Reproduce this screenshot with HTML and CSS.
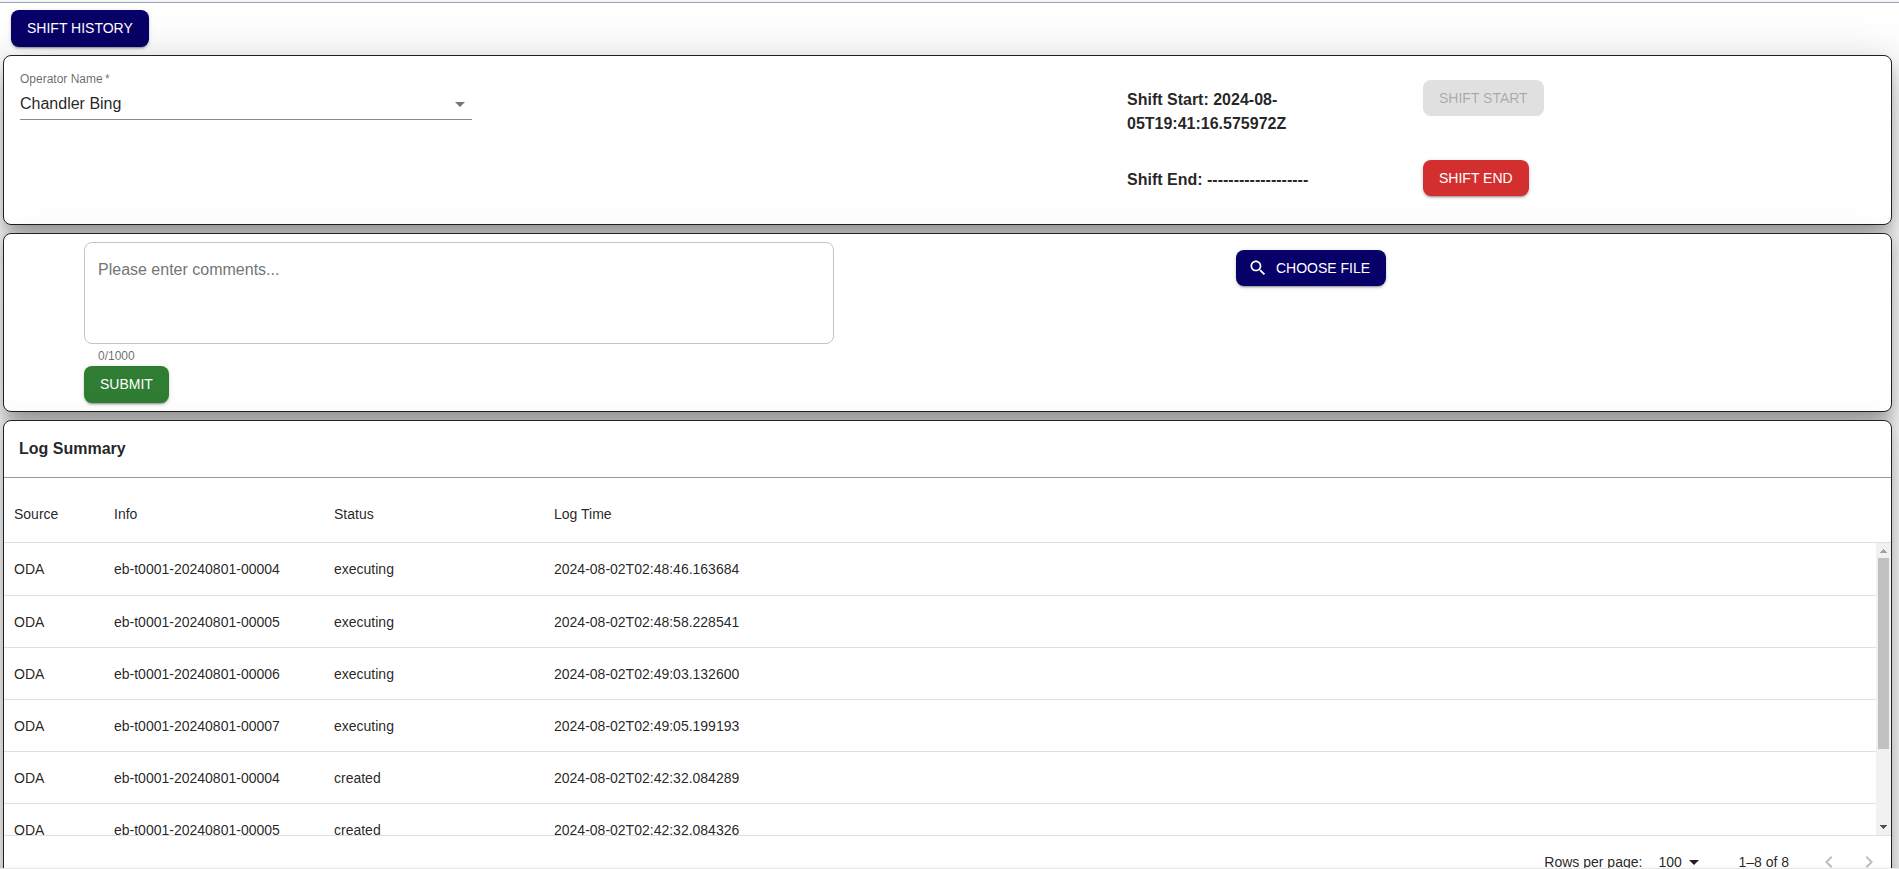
FILE: index.html
```html
<!DOCTYPE html>
<html lang="en">
<head>
<meta charset="utf-8">
<title>Shift Log</title>
<link rel="stylesheet" href="styles.css">
</head>
<body>
<header class="topbar"></header>
<main class="page">
  <div class="actions">
    <button class="btn btn-tall btn-primary" type="button">SHIFT HISTORY</button>
  </div>

  <section class="card shift">
    <div class="field">
      <label class="field-label" for="operator">Operator Name&thinsp;*</label>
      <div class="select-wrap">
        <select id="operator" class="field-select" required><option>Chandler Bing</option></select>
        <svg class="caret" viewBox="0 0 24 24" aria-hidden="true"><path d="M7 10l5 5 5-5z"/></svg>
      </div>
    </div>
    <p class="shift-text">Shift Start: 2024-08-05T19:41:16.575972Z</p>
    <div><button class="btn btn-disabled" type="button" disabled>SHIFT START</button></div>
    <p class="shift-text shift-end">Shift End: -------------------</p>
    <div><button class="btn btn-error" type="button">SHIFT END</button></div>
  </section>

  <section class="card comments">
    <form class="comment-form">
      <textarea class="comment-box" aria-label="Comments" placeholder="Please enter comments..." maxlength="1000"></textarea>
      <p class="helper">0/1000</p>
      <button class="btn btn-tall btn-success" type="button">SUBMIT</button>
    </form>
    <div class="upload">
      <button class="btn btn-primary btn-icon" type="button">
        <svg class="icon" viewBox="0 0 24 24" aria-hidden="true"><path d="M15.5 14h-.79l-.28-.27C15.41 12.59 16 11.11 16 9.5 16 5.91 13.09 3 9.5 3S3 5.91 3 9.5 5.91 16 9.5 16c1.61 0 3.09-.59 4.23-1.57l.27.28v.79l5 4.99L20.49 19l-4.99-5zm-6 0C7.01 14 5 11.99 5 9.5S7.01 5 9.5 5 14 7.01 14 9.5 11.99 14 9.5 14z"/></svg>
        CHOOSE FILE
      </button>
    </div>
  </section>

  <section class="card log">
    <h2 class="log-title">Log Summary</h2>
    <div class="table-wrap">
      <table class="log-table">
        <colgroup><col class="col-source"><col class="col-info"><col class="col-status"><col></colgroup>
        <thead>
          <tr><th>Source</th><th>Info</th><th>Status</th><th>Log Time</th></tr>
        </thead>
        <tbody>
          <tr><td>ODA</td><td>eb-t0001-20240801-00004</td><td>executing</td><td>2024-08-02T02:48:46.163684</td></tr>
          <tr><td>ODA</td><td>eb-t0001-20240801-00005</td><td>executing</td><td>2024-08-02T02:48:58.228541</td></tr>
          <tr><td>ODA</td><td>eb-t0001-20240801-00006</td><td>executing</td><td>2024-08-02T02:49:03.132600</td></tr>
          <tr><td>ODA</td><td>eb-t0001-20240801-00007</td><td>executing</td><td>2024-08-02T02:49:05.199193</td></tr>
          <tr><td>ODA</td><td>eb-t0001-20240801-00004</td><td>created</td><td>2024-08-02T02:42:32.084289</td></tr>
          <tr><td>ODA</td><td>eb-t0001-20240801-00005</td><td>created</td><td>2024-08-02T02:42:32.084326</td></tr>
        </tbody>
      </table>
      <div class="scrollbar" aria-hidden="true">
        <svg class="scroll-arrow" viewBox="0 0 15 15"><path fill="#a3a3a3" d="M7 6h1v1h1v1h1v1h1v1H4V9h1V8h1V7h1z"/></svg>
        <div class="scroll-track"><div class="scroll-thumb"></div></div>
        <svg class="scroll-arrow" viewBox="0 0 15 15"><path fill="#505050" d="M4 5h7v1h-1v1H9v1H8v1H7V8H6V7H5V6H4z"/></svg>
      </div>
    </div>
    <div class="pagination">
      <label for="rows">Rows per page:</label>
      <div class="rows-wrap">
        <select id="rows" class="rows-select"><option>100</option></select>
        <svg class="caret caret-dark" viewBox="0 0 24 24" aria-hidden="true"><path d="M7 10l5 5 5-5z"/></svg>
      </div>
      <span class="range">1–8 of 8</span>
      <button class="page-btn" type="button" aria-label="Previous page" disabled><svg viewBox="0 0 24 24"><path d="M15.41 7.41 14 6l-6 6 6 6 1.41-1.41L10.83 12z"/></svg></button>
      <button class="page-btn" type="button" aria-label="Next page" disabled><svg viewBox="0 0 24 24"><path d="M10 6 8.59 7.41 13.17 12l-4.58 4.59L10 18l6-6z"/></svg></button>
    </div>
  </section>
</main>
<footer class="footer"></footer>
</body>
</html>
```

FILE: styles.css
```css
* { box-sizing: border-box; }

body {
  margin: 0;
  height: 100vh;
  overflow: hidden;
  display: flex;
  flex-direction: column;
  background: #fff;
  color: rgba(0, 0, 0, 0.87);
  font: 14px/20px "Liberation Sans", Arial, sans-serif;
}

p, h2 { margin: 0; }

.topbar {
  flex: none;
  height: 3px;
  background: #f1f7fb;
  border-bottom: 1px solid #9da3a8;
}

.page {
  flex: 1;
  min-height: 0;
  overflow: hidden;
  display: flex;
  flex-direction: column;
  gap: 8px;
  padding: 7px 7px 0 3px;
}

.actions { padding-left: 8px; }

/* Buttons */
.btn {
  display: inline-flex;
  align-items: center;
  height: 36px;
  padding: 0 16px;
  border: 0;
  border-radius: 8px;
  color: #fff;
  font: inherit;
  white-space: nowrap;
  vertical-align: top;
  box-shadow: 0 3px 1px -2px rgba(0, 0, 0, 0.2), 0 2px 2px 0 rgba(0, 0, 0, 0.14), 0 1px 5px 0 rgba(0, 0, 0, 0.12);
}
.btn-tall { height: 37px; padding-bottom: 1px; }
.btn-primary { background: #070068; }
.btn-error { background: #d32f2f; }
.btn-success { background: #2e7d32; }
.btn-disabled { background: #e0e0e0; color: rgba(0, 0, 0, 0.26); box-shadow: none; }
.btn-icon { gap: 8px; padding-left: 12px; }
.icon { width: 20px; height: 20px; fill: currentColor; }

/* Cards */
.card {
  flex: none;
  position: relative;
  background: #fff;
  border: 1px solid #212121;
  border-radius: 8px;
  box-shadow: 0 11px 15px -7px rgba(0, 0, 0, 0.2), 0 24px 38px 3px rgba(0, 0, 0, 0.14), 0 9px 46px 8px rgba(0, 0, 0, 0.12), 0 6px 12px 0 rgba(0, 0, 0, 0.1);
}
.card + .card {
  box-shadow: 0 11px 15px -7px rgba(0, 0, 0, 0.2), 0 24px 38px 3px rgba(0, 0, 0, 0.14), 0 9px 46px 8px rgba(0, 0, 0, 0.04), 0 9px 16px 4px rgba(0, 0, 0, 0.14);
}

/* Shift panel */
.shift {
  display: grid;
  grid-template-columns: 452fr 655fr 296fr 452fr;
  row-gap: 24px;
  padding: 24px 16px 28px;
}
.field {
  grid-row: span 2;
  margin-top: -9px;
}
.field-label {
  display: block;
  color: rgba(0, 0, 0, 0.6);
  font-size: 12px;
  line-height: 16px;
}
.select-wrap { position: relative; }
.field-select {
  display: block;
  width: 100%;
  height: 33px;
  padding: 2px 0 0;
  border: 0;
  border-bottom: 1px solid #8c8c8c;
  appearance: none;
  background: none;
  color: inherit;
  font: inherit;
  font-size: 16px;
}
.caret {
  position: absolute;
  right: 0;
  top: 5px;
  width: 24px;
  height: 24px;
  fill: rgba(0, 0, 0, 0.54);
  pointer-events: none;
}
.shift-text {
  grid-column: 3;
  margin-left: 0;
  padding-top: 8px;
  font-size: 16px;
  font-weight: bold;
  line-height: 24px;
}
.shift-end { height: 36px; }
.shift { grid-template-columns: 452fr 655fr 296fr 452fr; }

/* Comments panel */
.comments {
  display: grid;
  grid-template-columns: 80fr 750fr 402fr 655fr;
  padding: 8px 0;
}
.comment-form {
  grid-column: 2;
  display: flex;
  flex-direction: column;
  align-items: flex-start;
}
.comment-box {
  display: block;
  width: 100%;
  height: 102px;
  padding: 15px 13px;
  border: 1px solid #c4c4c4;
  border-radius: 8px;
  resize: none;
  background: none;
  color: inherit;
  font: inherit;
  font-size: 16px;
  line-height: 24px;
}
.comment-box::placeholder { color: #757575; }
.helper {
  padding: 4px 14px 2px;
  color: rgba(0, 0, 0, 0.6);
  font-size: 12px;
  line-height: 16px;
}
.upload { grid-column: 4; padding-top: 8px; }

/* Log panel */
.log-title {
  padding: 16px 15px;
  border-bottom: 1px solid #999;
  font-size: 16px;
  line-height: 24px;
}
.table-wrap {
  position: relative;
  height: 358px;
  overflow: hidden;
  border-bottom: 1px solid #e0e0e0;
}
.log-table {
  width: 100%;
  table-layout: fixed;
  border-spacing: 0;
}
.col-source { width: 100px; }
.col-info, .col-status { width: 220px; }
.log-table th {
  height: 65px;
  padding: 8px 10px 0;
  border-bottom: 1px solid #e0e0e0;
  font-weight: normal;
  text-align: left;
}
.log-table td {
  height: 52px;
  padding: 0 10px;
}
.log-table tr + tr td { border-top: 1px solid #e0e0e0; }

.scrollbar {
  position: absolute;
  top: 65px;
  right: 0;
  bottom: 0;
  width: 15px;
  display: flex;
  flex-direction: column;
  background: #f1f1f1;
}
.scroll-arrow { flex: none; width: 15px; height: 15px; }
.scroll-track { flex: 1; padding: 0 2px; }
.scroll-thumb { height: 73%; background: #c1c1c1; }

.pagination {
  display: flex;
  align-items: center;
  justify-content: flex-end;
  height: 52px;
  padding-right: 2px;
  line-height: 14px;
}
.rows-wrap {
  position: relative;
  margin: 0 32px 0 8px;
}
.rows-select {
  display: block;
  width: 56px;
  height: 14px;
  padding: 0 24px 0 8px;
  border: 0;
  appearance: none;
  background: none;
  color: inherit;
  font: inherit;
}
.rows-wrap .caret { top: -5px; }
.caret-dark { fill: rgba(0, 0, 0, 0.87); }
.range { margin-right: 20px; }
.page-btn {
  display: block;
  width: 40px;
  height: 40px;
  padding: 8px;
  border: 0;
  background: none;
}
.page-btn svg { display: block; width: 24px; height: 24px; fill: rgba(0, 0, 0, 0.26); }

.footer {
  position: fixed;
  right: 0;
  bottom: 0;
  left: 0;
  height: 1px;
  background: #e8e8e8;
  box-shadow: 0 0 4px rgba(0, 0, 0, 0.12);
}
```
